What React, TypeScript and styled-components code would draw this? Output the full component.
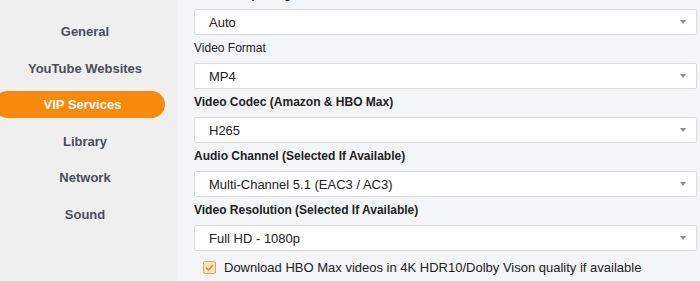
import React from 'react';
import styled, { createGlobalStyle } from 'styled-components';

const GlobalStyle = createGlobalStyle`
  html, body {
    margin: 0;
    padding: 0;
    height: 100%;
    overflow: hidden;
  }
  body {
    font-family: "Liberation Sans", Arial, sans-serif;
    background-color: #f4f5f7;
  }
  #root {
    height: 100%;
  }
`;

const Layout = styled.div`
  display: flex;
  height: 281px;
  overflow: hidden;
`;

const Sidebar = styled.nav`
  width: 178px;
  flex-shrink: 0;
  background-color: #efefef;
  display: flex;
  flex-direction: column;
  padding-top: 18px;
  gap: 9.5px;
`;

const NavItem = styled.div<{ $active?: boolean }>`
  height: 27px;
  margin-left: ${(p) => (p.$active ? '-6px' : '0')};
  width: ${(p) => (p.$active ? '171px' : '170px')};
  padding-left: ${(p) => (p.$active ? '6px' : '0')};
  box-sizing: border-box;
  display: flex;
  align-items: center;
  justify-content: center;
  border-radius: 14px;
  font-size: 13px;
  font-weight: 700;
  color: ${(p) => (p.$active ? '#ffffff' : '#4a4e59')};
  background-color: ${(p) => (p.$active ? '#f7890d' : 'transparent')};
`;

const Main = styled.main`
  flex: 1;
  padding: 0 3px 0 16px;
  margin-top: -19px;
  display: flex;
  flex-direction: column;
`;

const Label = styled.div<{ $plain?: boolean }>`
  font-size: 12px;
  line-height: 16px;
  height: 16px;
  padding: 5px 0 7px;
  color: #222;
  font-weight: ${(p) => (p.$plain ? 400 : 700)};
`;

const Select = styled.div`
  height: 26px;
  box-sizing: border-box;
  background: #ffffff;
  border: 1px solid #dadada;
  border-radius: 2px;
  display: flex;
  align-items: center;
  justify-content: space-between;
  padding: 0 10px 0 14px;
  font-size: 13px;
  color: #222;
`;

const Arrow = styled.span`
  width: 0;
  height: 0;
  border-left: 3.5px solid transparent;
  border-right: 3.5px solid transparent;
  border-top: 4px solid #8a8d96;
`;

const CheckRow = styled.label`
  display: flex;
  align-items: center;
  gap: 8px;
  margin-top: 9px;
  padding-left: 9px;
  font-size: 13px;
  color: #222;
`;

const CheckBox = styled.span`
  width: 13px;
  height: 13px;
  box-sizing: border-box;
  border: 1px solid #f0a14a;
  border-radius: 2px;
  background: #fde6c9;
  display: flex;
  align-items: center;
  justify-content: center;
`;

const navItems = ['General', 'YouTube Websites', 'VIP Services', 'Library', 'Network', 'Sound'];

const fields: { label: string; value: string; plain?: boolean }[] = [
  { label: 'HBO Europe Region', value: 'Auto' },
  { label: 'Video Format', value: 'MP4', plain: true },
  { label: 'Video Codec (Amazon & HBO Max)', value: 'H265' },
  { label: 'Audio Channel (Selected If Available)', value: 'Multi-Channel 5.1 (EAC3 / AC3)' },
  { label: 'Video Resolution (Selected If Available)', value: 'Full HD - 1080p' },
];

const App: React.FC = () => {
  return (
    <>
      <GlobalStyle />
      <Layout>
        <Sidebar>
          {navItems.map((item) => (
            <NavItem key={item} $active={item === 'VIP Services'}>
              {item}
            </NavItem>
          ))}
        </Sidebar>
        <Main>
          {fields.map((f) => (
            <React.Fragment key={f.label}>
              <Label $plain={f.plain}>{f.label}</Label>
              <Select>
                {f.value}
                <Arrow />
              </Select>
            </React.Fragment>
          ))}
          <CheckRow>
            <CheckBox>
              <svg width="9" height="7" viewBox="0 0 9 7">
                <path d="M1 3.5 L3.5 6 L8 1" fill="none" stroke="#ee8a1c" strokeWidth="1.6" />
              </svg>
            </CheckBox>
            Download HBO Max videos in 4K HDR10/Dolby Vison quality if available
          </CheckRow>
        </Main>
      </Layout>
    </>
  );
};

export default App;
